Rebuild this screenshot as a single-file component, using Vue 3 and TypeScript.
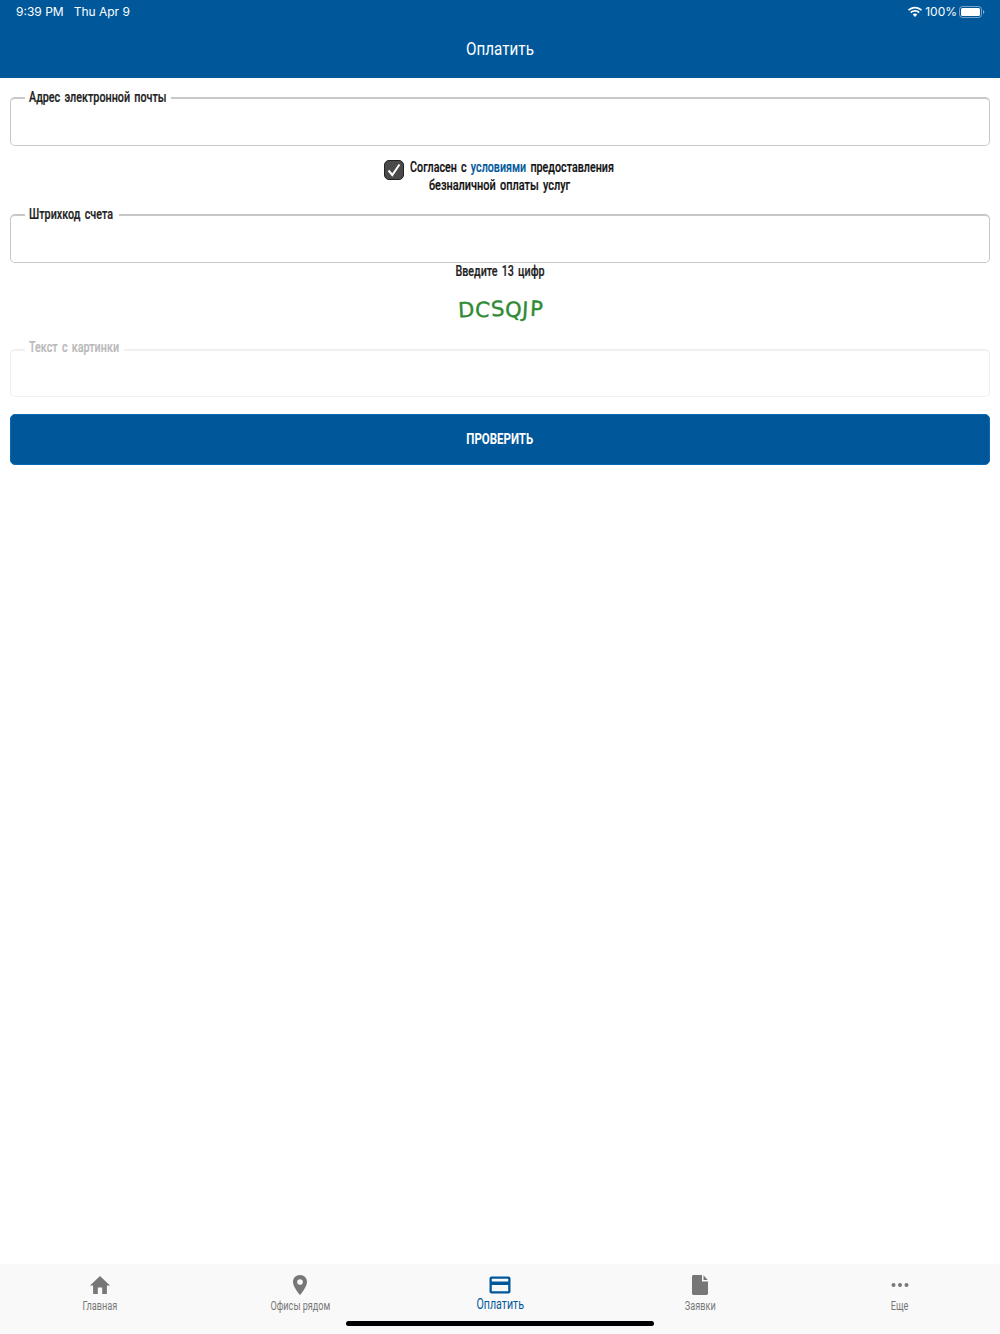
<script setup lang="ts">
import { ref } from "vue";

const email = ref("");
const barcode = ref("");
const captcha = ref("");
const agreed = ref(true);

const tabs = [
	{ name: "Главная", icon: "home" },
	{ name: "Офисы рядом", icon: "pin" },
	{ name: "Оплатить", icon: "card" },
	{ name: "Заявки", icon: "doc" },
	{ name: "Еще", icon: "more" }
];
const activeTab = ref("Оплатить");

// wobbly captcha letters
const captchaLetters = [
	{ ch: "D", rot: -3, y: 0 },
	{ ch: "C", rot: 5, y: 0 },
	{ ch: "S", rot: -4, y: -1 },
	{ ch: "Q", rot: 3, y: 0 },
	{ ch: "J", rot: 3, y: 0 },
	{ ch: "P", rot: 3, y: -1 }
];
</script>

<template>
	<div class="screen">
		<header class="header">
			<div class="status">
				<div class="status-left">
					<span>9:39 PM</span>
					<span>Thu Apr 9</span>
				</div>
				<div class="status-right">
					<svg width="16" height="12" viewBox="0 0 16 12" fill="#fff">
						<path d="M8 2.400c2.300 0 4.400.9 6 2.400l1.100-1.200C13.200 1.800 10.700.7 8 .7S2.800 1.800.9 3.600L2 4.800c1.600-1.500 3.700-2.400 6-2.400z" />
						<path d="M8 5.800c1.400 0 2.600.5 3.600 1.400l1.100-1.200C11.400 4.800 9.800 4.100 8 4.100S4.600 4.800 3.300 6l1.100 1.200c1-.9 2.200-1.400 3.600-1.400z" />
						<path d="M8 7.500c-.9 0-1.700.3-2.300.9L8 11l2.300-2.600c-.6-.6-1.400-.9-2.300-.9z" />
					</svg>
					<span>100%</span>
					<svg width="26" height="12" viewBox="0 0 26 12">
						<rect x="0.500" y="0.500" width="22" height="11" rx="3" fill="none" stroke="#fff" stroke-opacity="0.450" />
						<rect x="2" y="2" width="19" height="8" rx="1.500" fill="#fff" />
						<path d="M24 4v4c.8-.3 1.300-1.100 1.300-2S24.800 4.300 24 4z" fill="#fff" fill-opacity="0.500" />
					</svg>
				</div>
			</div>
			<h1 class="title">Оплатить</h1>
		</header>

		<main class="form">
			<fieldset class="field">
				<legend class="w-email"><span>Адрес электронной почты</span></legend>
				<input v-model="email" type="email" />
			</fieldset>

			<div class="terms">
				<div class="terms-row">
					<button class="check" :class="{ on: agreed }" type="button" @click="agreed = !agreed">
						<svg v-if="agreed" width="20" height="20" viewBox="0 0 20 20" fill="none">
							<path d="M4.500 10.500 8.300 15 15.500 4.500" stroke="#fff" stroke-width="2" />
						</svg>
					</button>
					<p class="terms-first">
						<span>Согласен с <a href="#">условиями</a> предоставления</span>
					</p>
				</div>
				<p class="terms-second">безналичной оплаты услуг</p>
			</div>

			<fieldset class="field barcode">
				<legend class="w-barcode"><span>Штрихкод счета</span></legend>
				<input v-model="barcode" type="text" />
			</fieldset>
			<p class="hint">Введите 13 цифр</p>

			<div class="captcha">
				<span
					v-for="l in captchaLetters"
					:key="l.ch"
					:style="{ transform: `translateY(${l.y}px) rotate(${l.rot}deg)` }"
				>{{ l.ch }}</span>
			</div>

			<fieldset class="field disabled">
				<legend class="w-captcha"><span>Текст с картинки</span></legend>
				<input v-model="captcha" type="text" disabled />
			</fieldset>

			<button class="submit" type="button"><span>ПРОВЕРИТЬ</span></button>
		</main>

		<nav class="tabs">
			<div
				v-for="tab in tabs"
				:key="tab.name"
				class="tab"
				:class="{ active: activeTab === tab.name }"
				@click="activeTab = tab.name"
			>
				<svg width="24" height="24" viewBox="0 0 24 24" fill="currentColor">
					<path v-if="tab.icon === 'home'" d="M9.800 21v-6.500h4.400V21h4.700v-8.500H22L12 3 2 12.500h3.100V21z" />
					<path
						v-else-if="tab.icon === 'pin'"
						fill-rule="evenodd"
						d="M12 2C7.900 2 5 5 5 9c0 5 7 13 7 13s7-8 7-13c0-4-2.900-7-7-7zm0 9.800A2.800 2.800 0 1 1 12 6.200a2.800 2.800 0 0 1 0 5.600z"
					/>
					<path
						v-else-if="tab.icon === 'card'"
						fill-rule="evenodd"
						d="M3.500 3.500h17c1.100 0 2 .9 2 2v13c0 1.100-.9 2-2 2h-17c-1.100 0-2-.9-2-2v-13c0-1.100.9-2 2-2zm.3 2.300v2.700h16.400V5.800zm0 6.200v6.200h16.400V12z"
					/>
					<path
						v-else-if="tab.icon === 'doc'"
						d="M5.500 2H14v6.500h6V20.500c0 .9-.7 1.500-1.500 1.500h-13c-.8 0-1.500-.6-1.500-1.500v-17C4 2.600 4.700 2 5.500 2zM15.500 2.300l4.300 4.700h-4.300z"
					/>
					<template v-else>
						<circle cx="5.500" cy="12" r="2" />
						<circle cx="12" cy="12" r="2" />
						<circle cx="18.500" cy="12" r="2" />
					</template>
				</svg>
				<span>{{ tab.name }}</span>
			</div>
			<div class="home-bar" />
		</nav>
	</div>
</template>

<style scoped>
.screen {
	display: flex;
	flex-direction: column;
	height: 1334px;
	background: #fff;
	font-family: Roboto, "Liberation Sans", sans-serif;
	color: #1a1a1a;
}

.header {
	height: 78px;
	background: #00589b;
	color: #fff;
	flex-shrink: 0;
}

.status {
	display: flex;
	justify-content: space-between;
	align-items: center;
	height: 23px;
	padding: 0 15px 0 16px;
	font-family: Inter, "Liberation Sans", sans-serif;
	font-size: 12px;
}

.status-left {
	display: flex;
	gap: 10px;
}

.status-right {
	display: flex;
	align-items: center;
	gap: 2px;
}

.title {
	margin: 0;
	padding-top: 5px;
	font-size: 19px;
	line-height: 42px;
	font-weight: 400;
	text-align: center;
	transform: scaleX(0.8);
}

.form {
	flex: 1;
	display: flex;
	flex-direction: column;
	padding: 12px 10px 0;
}

.field {
	margin: 0;
	padding: 0 14px;
	height: 56px;
	border: 1px solid #c8c8c8;
	border-top: 2px solid #c8c8c8;
	border-radius: 5px;
	box-sizing: border-box;
	min-width: 0;
}

.field legend {
	box-sizing: border-box;
	padding: 0;
	font-size: 14px;
	line-height: 16px;
	font-weight: 500;
	word-spacing: 2px;
	-webkit-text-stroke: 0.200px currentColor;
	color: #222;
	white-space: nowrap;
}

.field legend span {
	display: inline-block;
	margin-left: 4px;
	transform: translateY(-1.500px) scaleX(0.77);
	transform-origin: left;
}

.w-email {
	width: 146px;
}

.w-barcode {
	width: 94px;
}

.w-captcha {
	width: 99px;
}

.field input {
	display: block;
	width: 100%;
	height: 37px;
	padding: 0;
	border: 0;
	outline: 0;
	background: transparent;
	font: inherit;
}

.field.disabled {
	height: 55px;
	border-color: #f0f0f0;
}

.field.disabled legend {
	color: #b9b9b9;
}

.field.disabled legend span {
	transform: translateY(-3px) scaleX(0.77);
}

.terms {
	display: flex;
	flex-direction: column;
	align-items: center;
	margin-top: 13px;
	font-size: 14px;
	line-height: 17.500px;
	font-weight: 500;
	word-spacing: 2px;
	-webkit-text-stroke: 0.200px currentColor;
	color: #111;
}

.terms-row {
	display: flex;
	gap: 5px;
	height: 17.500px;
	margin-right: 2px;
}

.check {
	width: 20px;
	height: 20px;
	margin-top: 1px;
	padding: 0;
	border: 1px solid #222;
	border-radius: 5px;
	background: #4a4a4a;
	cursor: pointer;
	flex-shrink: 0;
}

.check svg {
	display: block;
	margin: -1px;
}

.terms-first {
	display: flex;
	justify-content: center;
	width: 205px;
	margin: 0;
}

.terms-first span {
	flex-shrink: 0;
	white-space: nowrap;
	transform: scaleX(0.766);
}

.terms-second {
	margin: 0;
	white-space: nowrap;
	transform: scaleX(0.78);
}

.terms a {
	color: #00589b;
	text-decoration: none;
}

.barcode {
	margin-top: 13px;
}

.hint {
	margin: 0;
	font-size: 14px;
	line-height: 16px;
	font-weight: 500;
	word-spacing: 2px;
	-webkit-text-stroke: 0.200px currentColor;
	text-align: center;
	color: #222;
	transform: scaleX(0.766);
}

.captcha {
	display: flex;
	justify-content: center;
	gap: 1px;
	margin: 15px 0 16px;
	height: 32px;
	font-family: "DejaVu Sans", sans-serif;
	font-size: 21px;
	line-height: 32px;
	color: #2f8a35;
	-webkit-text-stroke: 0.400px #2f8a35;
}

.captcha span {
	display: inline-block;
}

.submit {
	height: 51px;
	margin-top: 17px;
	padding: 0 0 2px;
	border: 1px solid #0a68b4;
	border-radius: 5px;
	background: #00589b;
	color: #fff;
	font-family: inherit;
	font-size: 14px;
	font-weight: 700;
	cursor: pointer;
}

.submit span {
	display: inline-block;
	transform: scaleX(0.82);
}

.tabs {
	position: relative;
	display: grid;
	grid-template-columns: repeat(5, 1fr);
	height: 70px;
	flex-shrink: 0;
	background: #f9f9f9;
}

.tab {
	display: flex;
	flex-direction: column;
	align-items: center;
	padding-top: 9px;
	color: #777;
	font-size: 12px;
	line-height: 16px;
	cursor: pointer;
}

.tab span {
	margin-top: 1px;
	transform: scaleX(0.76);
	white-space: nowrap;
}

.tab.active {
	color: #00589b;
	font-size: 14px;
}

.tab.active span {
	margin-top: -1px;
}

.home-bar {
	position: absolute;
	left: 346px;
	bottom: 8px;
	width: 308px;
	height: 5px;
	border-radius: 3px;
	background: #000;
}
</style>

<style>
html,
body {
	margin: 0;
	background: #fff;
}
</style>
